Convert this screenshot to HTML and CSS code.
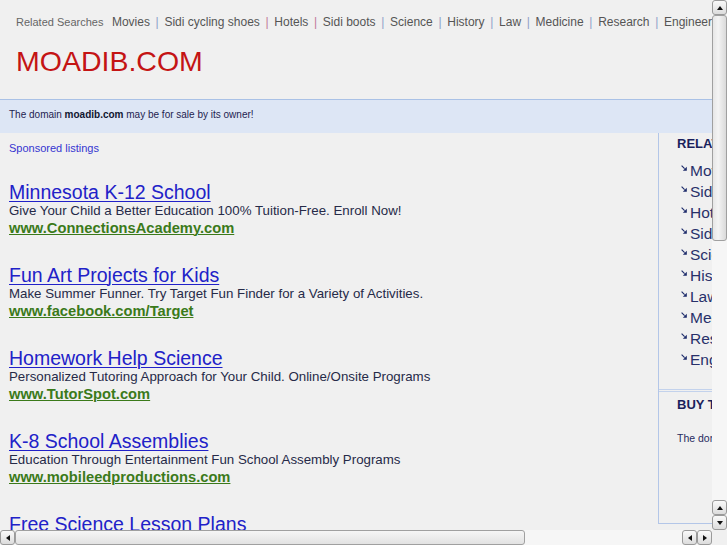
FILE: index.html
```html
<!DOCTYPE html>
<html>
<head>
<meta charset="utf-8">
<link rel="stylesheet" href="styles.css">
</head>
<body>
<div class="viewport">
  <div class="page">
    <div class="inner">
      <div class="header">
        <div class="related">
          <span class="rel-label">Related Searches</span>
          <a class="rel-link">Movies</a><span class="sep sep-b">|</span><a class="rel-link">Sidi cycling shoes</a><span class="sep sep-p">|</span><a class="rel-link">Hotels</a><span class="sep sep-p">|</span><a class="rel-link">Sidi boots</a><span class="sep sep-b">|</span><a class="rel-link">Science</a><span class="sep sep-b">|</span><a class="rel-link">History</a><span class="sep sep-b">|</span><a class="rel-link">Law</a><span class="sep sep-b">|</span><a class="rel-link">Medicine</a><span class="sep sep-b">|</span><a class="rel-link">Research</a><span class="sep sep-b">|</span><a class="rel-link">Engineering</a>
        </div>
        <div class="brand">MOADIB.COM</div>
      </div>
      <div class="band">The domain <b>moadib.com</b> may be for sale by its owner!</div>
      <div class="columns">
        <div class="main">
          <div class="sponsored">Sponsored listings</div>
          <div class="ad">
            <a class="ad-title">Minnesota K-12 School</a>
            <div class="ad-desc">Give Your Child a Better Education 100% Tuition-Free. Enroll Now!</div>
            <a class="ad-url">www.ConnectionsAcademy.com</a>
          </div>
          <div class="ad">
            <a class="ad-title">Fun Art Projects for Kids</a>
            <div class="ad-desc">Make Summer Funner. Try Target Fun Finder for a Variety of Activities.</div>
            <a class="ad-url">www.facebook.com/Target</a>
          </div>
          <div class="ad">
            <a class="ad-title">Homework Help Science</a>
            <div class="ad-desc">Personalized Tutoring Approach for Your Child. Online/Onsite Programs</div>
            <a class="ad-url">www.TutorSpot.com</a>
          </div>
          <div class="ad">
            <a class="ad-title">K-8 School Assemblies</a>
            <div class="ad-desc">Education Through Entertainment Fun School Assembly Programs</div>
            <a class="ad-url">www.mobileedproductions.com</a>
          </div>
          <div class="ad">
            <a class="ad-title">Free Science Lesson Plans</a>
            <div class="ad-desc">Lesson Plans, Worksheets and Activities for Teachers.</div>
            <a class="ad-url">www.education.com</a>
          </div>
        </div>
        <div class="side">
          <div class="side-list">
            <div class="side-head">RELATED SEARCHES</div>
            <ul class="links">
              <li><svg class="arr" viewBox="0 0 6 6"><path d="M0.6 0.6 L3.6 3.6" stroke="#1c2a6a" stroke-width="1.2" fill="none"/><path d="M5.8 5.8 L1.8 5.8 L5.8 1.8 Z" fill="#1c2a6a"/></svg>Movies</li>
              <li><svg class="arr" viewBox="0 0 6 6"><path d="M0.6 0.6 L3.6 3.6" stroke="#1c2a6a" stroke-width="1.2" fill="none"/><path d="M5.8 5.8 L1.8 5.8 L5.8 1.8 Z" fill="#1c2a6a"/></svg>Sidi cycling shoes</li>
              <li><svg class="arr" viewBox="0 0 6 6"><path d="M0.6 0.6 L3.6 3.6" stroke="#1c2a6a" stroke-width="1.2" fill="none"/><path d="M5.8 5.8 L1.8 5.8 L5.8 1.8 Z" fill="#1c2a6a"/></svg>Hotels</li>
              <li><svg class="arr" viewBox="0 0 6 6"><path d="M0.6 0.6 L3.6 3.6" stroke="#1c2a6a" stroke-width="1.2" fill="none"/><path d="M5.8 5.8 L1.8 5.8 L5.8 1.8 Z" fill="#1c2a6a"/></svg>Sidi boots</li>
              <li><svg class="arr" viewBox="0 0 6 6"><path d="M0.6 0.6 L3.6 3.6" stroke="#1c2a6a" stroke-width="1.2" fill="none"/><path d="M5.8 5.8 L1.8 5.8 L5.8 1.8 Z" fill="#1c2a6a"/></svg>Science</li>
              <li><svg class="arr" viewBox="0 0 6 6"><path d="M0.6 0.6 L3.6 3.6" stroke="#1c2a6a" stroke-width="1.2" fill="none"/><path d="M5.8 5.8 L1.8 5.8 L5.8 1.8 Z" fill="#1c2a6a"/></svg>History</li>
              <li><svg class="arr" viewBox="0 0 6 6"><path d="M0.6 0.6 L3.6 3.6" stroke="#1c2a6a" stroke-width="1.2" fill="none"/><path d="M5.8 5.8 L1.8 5.8 L5.8 1.8 Z" fill="#1c2a6a"/></svg>Law</li>
              <li><svg class="arr" viewBox="0 0 6 6"><path d="M0.6 0.6 L3.6 3.6" stroke="#1c2a6a" stroke-width="1.2" fill="none"/><path d="M5.8 5.8 L1.8 5.8 L5.8 1.8 Z" fill="#1c2a6a"/></svg>Medicine</li>
              <li><svg class="arr" viewBox="0 0 6 6"><path d="M0.6 0.6 L3.6 3.6" stroke="#1c2a6a" stroke-width="1.2" fill="none"/><path d="M5.8 5.8 L1.8 5.8 L5.8 1.8 Z" fill="#1c2a6a"/></svg>Research</li>
              <li><svg class="arr" viewBox="0 0 6 6"><path d="M0.6 0.6 L3.6 3.6" stroke="#1c2a6a" stroke-width="1.2" fill="none"/><path d="M5.8 5.8 L1.8 5.8 L5.8 1.8 Z" fill="#1c2a6a"/></svg>Engineering</li>
            </ul>
          </div>
          <div class="side-buy">
            <div class="side-head">BUY THIS DOMAIN</div>
            <div class="buy-text">The domain moadib.com may be for sale by its owner!</div>
          </div>
        </div>
      </div>
    </div>
  </div>
  <div class="vscroll">
    <div class="sb-btn sb-up"><span class="tri tri-up"></span></div>
    <div class="v-thumb"><span class="grip"></span></div>
    <div class="v-track"></div>
    <div class="sb-btn sb-up"><span class="tri tri-up"></span></div>
    <div class="sb-btn"><span class="tri tri-down"></span></div>
  </div>
  <div class="hscroll">
    <div class="sb-btn"><span class="tri tri-left"></span></div>
    <div class="h-thumb"><span class="grip"></span></div>
    <div class="sb-btn"><span class="tri tri-left"></span></div>
    <div class="sb-btn"><span class="tri tri-right"></span></div>
  </div>
  <div class="corner"></div>
</div>
</body>
</html>
```
FILE: styles.css
```css
html, body {
  margin: 0;
  padding: 0;
  overflow: hidden;
  background: #f0f0f0;
  font-family: "Liberation Sans", Arial, sans-serif;
}
.viewport {
  display: grid;
  grid-template-columns: 712px 15px;
  grid-template-rows: 530px 15px;
  width: 727px;
  height: 545px;
}
.page {
  overflow: hidden;
  background: #f0f0f0;
}
.inner {
  width: 1000px;
}
.header {
  height: 100px;
  border-bottom: 1px solid #a9c1e6;
  padding: 13px 0 0 16px;
  box-sizing: border-box;
}
.related {
  white-space: nowrap;
  height: 16px;
  line-height: 16px;
}
.rel-label {
  font-size: 11px;
  color: #666;
  margin-right: 4px;
}
.rel-link {
  font-size: 12px;
  color: #555;
}
.sep {
  font-size: 12px;
  padding: 0 5.7px;
}
.sep-b { color: #8ea0c8; }
.sep-p { color: #c07a9a; }
.brand {
  margin-top: 15px;
  font-size: 28.5px;
  line-height: 34px;
  color: #c41414;
}
.band {
  height: 33px;
  line-height: 30px;
  background: #dde6f5;
  padding-left: 9px;
  font-size: 10px;
  color: #1e2350;
}
.band b { color: #101530; }
.columns {
  display: flex;
}
.main {
  width: 649px;
  padding-left: 9px;
}
.sponsored {
  font-size: 11px;
  color: #3535d0;
  margin-top: 8px;
  line-height: 14px;
}
.ad {
  display: flex;
  flex-direction: column;
  align-items: flex-start;
  height: 83px;
}
.sponsored + .ad { margin-top: 26px; }
.ad-title {
  font-size: 19.5px;
  line-height: 22px;
  color: #2121c8;
  text-decoration: underline;
  text-decoration-thickness: 1px;
  text-underline-offset: 2px;
}
.ad-desc {
  font-size: 13.3px;
  line-height: 16px;
  color: #262a48;
  white-space: nowrap;
}
.ad-url {
  font-size: 14.7px;
  line-height: 18px;
  font-weight: bold;
  color: #3b7a1a;
  text-decoration: underline;
  text-decoration-thickness: 1px;
}
.side {
  width: 250px;
  border-left: 1px solid #b3c6e8;
  border-bottom: 1px solid #b3c6e8;
  height: 390px;
  align-self: flex-start;
}
.side-list {
  padding: 3px 0 0 18px;
  height: 253px;
  border-bottom: 3px double #c3d2ec;
}
.side-head {
  font-size: 13px;
  font-weight: bold;
  color: #1a1f5c;
  line-height: 16px;
}
.links {
  list-style: none;
  margin: 8px 0 0 0;
  padding: 0 0 0 4px;
}
.links li {
  font-size: 15.5px;
  line-height: 21px;
  color: #28306a;
  display: flex;
  align-items: center;
  white-space: nowrap;
}
.arr {
  width: 6px;
  height: 6px;
  margin-right: 3px;
  margin-top: -5px;
}
.side-buy {
  padding: 5px 0 0 18px;
}
.side-buy .buy-text {
  margin-top: 19px;
  font-size: 10.5px;
  color: #262a60;
  white-space: nowrap;
}
/* scrollbars */
.vscroll {
  display: flex;
  flex-direction: column;
  background: #f6f6f6;
}
.hscroll {
  display: flex;
  background: #f6f6f6;
}
.corner { background: #f0f0f0; }
.sb-btn {
  width: 15px;
  height: 15px;
  box-sizing: border-box;
  border: 1px solid #9a9a9a;
  border-radius: 3px;
  background: linear-gradient(#fafafa, #dcdcdc);
  display: flex;
  align-items: center;
  justify-content: center;
  flex: none;
}
.hscroll .sb-btn:nth-of-type(3) { margin-left: auto; }
.v-thumb {
  height: 226px;
  box-sizing: border-box;
  border: 1px solid #a0a0a0;
  border-radius: 3px;
  background: linear-gradient(90deg, #e6e6e6, #f4f4f4 40%, #dadada);
  display: flex;
  align-items: flex-start;
  justify-content: center;
  padding-top: 10px;
}
.v-thumb .grip {
  width: 8px;
  height: 16px;
  background-image: radial-gradient(#c8c8c8 40%, transparent 45%);
  background-size: 2px 2px;
}
.v-track { flex: 1; }
.h-thumb {
  width: 510px;
  box-sizing: border-box;
  border: 1px solid #a0a0a0;
  border-radius: 3px;
  background: linear-gradient(#f6f6f6, #e2e2e2);
  display: flex;
  align-items: center;
  justify-content: center;
}
.h-thumb .grip {
  width: 18px;
  height: 8px;
  background-image: radial-gradient(#c8c8c8 40%, transparent 45%);
  background-size: 2px 2px;
}
.tri { width: 0; height: 0; display: block; }
.tri-up { border-left: 3px solid transparent; border-right: 3px solid transparent; border-bottom: 4px solid #111; }
.tri-down { border-left: 3px solid transparent; border-right: 3px solid transparent; border-top: 4px solid #111; }
.tri-left { border-top: 3px solid transparent; border-bottom: 3px solid transparent; border-right: 4px solid #111; }
.tri-right { border-top: 3px solid transparent; border-bottom: 3px solid transparent; border-left: 4px solid #111; }
```
